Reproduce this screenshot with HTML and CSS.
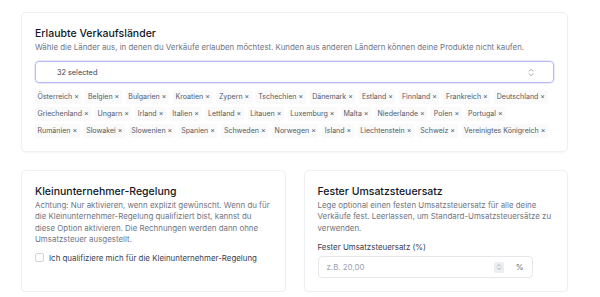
FILE: index.html
```html
<!DOCTYPE html>
<html lang="de">
<head>
<meta charset="utf-8">
<link rel="stylesheet" href="styles.css">
</head>
<body>
<div class="page">
  <section class="card card-wide">
    <h2 class="title">Erlaubte Verkaufsländer</h2>
    <p class="desc">Wähle die Länder aus, in denen du Verkäufe erlauben möchtest. Kunden aus anderen Ländern können deine Produkte nicht kaufen.</p>
    <div class="select">
      <span class="select-text">32 selected</span>
      <svg class="chev" width="8" height="9" viewBox="0 0 8 9"><path d="M2 3.2 L4 1.3 L6 3.2 M2 5.8 L4 7.7 L6 5.8" fill="none" stroke="#9ca3af" stroke-width="0.9" stroke-linecap="round" stroke-linejoin="round"/></svg>
    </div>
    <div class="chips">
      <span class="chip">Österreich ×</span>
      <span class="chip">Belgien ×</span>
      <span class="chip">Bulgarien ×</span>
      <span class="chip">Kroatien ×</span>
      <span class="chip">Zypern ×</span>
      <span class="chip">Tschechien ×</span>
      <span class="chip">Dänemark ×</span>
      <span class="chip">Estland ×</span>
      <span class="chip">Finnland ×</span>
      <span class="chip">Frankreich ×</span>
      <span class="chip">Deutschland ×</span>
      <span class="chip">Griechenland ×</span>
      <span class="chip">Ungarn ×</span>
      <span class="chip">Irland ×</span>
      <span class="chip">Italien ×</span>
      <span class="chip">Lettland ×</span>
      <span class="chip">Litauen ×</span>
      <span class="chip">Luxemburg ×</span>
      <span class="chip">Malta ×</span>
      <span class="chip">Niederlande ×</span>
      <span class="chip">Polen ×</span>
      <span class="chip">Portugal ×</span>
      <span class="chip">Rumänien ×</span>
      <span class="chip">Slowakei ×</span>
      <span class="chip">Slowenien ×</span>
      <span class="chip">Spanien ×</span>
      <span class="chip">Schweden ×</span>
      <span class="chip">Norwegen ×</span>
      <span class="chip">Island ×</span>
      <span class="chip">Liechtenstein ×</span>
      <span class="chip">Schweiz ×</span>
      <span class="chip">Vereinigtes Königreich ×</span>
    </div>
  </section>
  <section class="card">
    <h2 class="title">Kleinunternehmer-Regelung</h2>
    <p class="desc">Achtung: Nur aktivieren, wenn explizit gewünscht. Wenn du für die Kleinunternehmer-Regelung qualifiziert bist, kannst du diese Option aktivieren. Die Rechnungen werden dann ohne Umsatzsteuer ausgestellt.</p>
    <label class="check">
      <span class="box"></span>
      <span class="check-label">Ich qualifiziere mich für die Kleinunternehmer-Regelung</span>
    </label>
  </section>
  <section class="card">
    <h2 class="title">Fester Umsatzsteuersatz</h2>
    <p class="desc">Lege optional einen festen Umsatzsteuersatz für alle deine Verkäufe fest. Leerlassen, um Standard-Umsatzsteuersätze zu verwenden.</p>
    <div class="field-label">Fester Umsatzsteuersatz (%)</div>
    <div class="input">
      <span class="placeholder">z.B. 20,00</span>
      <span class="spin">
        <svg width="6" height="8" viewBox="0 0 6 8"><path d="M1.5 3 L3 1.5 L4.5 3 M1.5 5 L3 6.5 L4.5 5" fill="none" stroke="#9ca3af" stroke-width="0.8" stroke-linecap="round" stroke-linejoin="round"/></svg>
      </span>
      <span class="unit">%</span>
    </div>
  </section>
</div>
</body>
</html>
```
FILE: styles.css
```css
* { box-sizing: border-box; }
html, body { margin: 0; padding: 0; background: #ffffff; }
body {
  font-family: Inter, "Noto Sans", sans-serif;
  color: #111827;
}
.page {
  display: grid;
  grid-template-columns: 1fr 1fr;
  gap: 18px;
  padding: 12px 32px 0 21px;
}
.card {
  background: #fff;
  border: 1px solid #eef0f3;
  border-radius: 5px;
  box-shadow: 0 1px 2px rgba(0,0,0,0.04);
  padding: 14px 13px 13px 13px;
}
.card-wide { grid-column: 1 / 3; }
.title {
  margin: 0;
  font-size: 10.5px;
  line-height: 14px;
  font-weight: 500;
  color: #111827;
}
.desc {
  margin: 1px 0 0 0;
  font-size: 7.9px;
  line-height: 11.4px;
  color: #70757f;
}
.select {
  margin-top: 8px;
  height: 22px;
  border: 1px solid #b9b8fb;
  border-radius: 4px;
  display: flex;
  align-items: center;
  padding: 0 18px 0 21px;
  box-shadow: 0 0 0 0.5px #d6d5fd;
}
.select-text {
  flex: 1;
  font-size: 7.3px;
  color: #374151;
}
.chev { display: block; }
.chips {
  display: flex;
  flex-wrap: wrap;
  gap: 2.8px 4px;
  margin-top: 7px;
  padding-right: 5px;
}
.chip {
  background: #fafafb;
  border-radius: 2px;
  padding: 0 2.5px;
  height: 14px;
  line-height: 14px;
  font-size: 7.05px;
  color: #555b66;
}
.check {
  display: flex;
  align-items: center;
  gap: 5px;
  margin-top: 7px;
}
.box {
  width: 9px;
  height: 9px;
  border: 1px solid #d1d5db;
  border-radius: 2px;
  background: #fff;
}
.check-label {
  font-size: 7.9px;
  color: #374151;
}
.field-label {
  margin-top: 8px;
  font-size: 7.9px;
  line-height: 11px;
  color: #374151;
}
.input {
  margin-top: 3px;
  width: 215px;
  height: 22px;
  border: 1px solid #e5e7eb;
  border-radius: 4px;
  display: flex;
  align-items: center;
  padding: 0 8px 0 8px;
}
.placeholder {
  flex: 1;
  font-size: 7.9px;
  color: #9ca3af;
}
.spin {
  width: 10px;
  height: 11px;
  background: #eceef1;
  border-radius: 2px;
  display: flex;
  align-items: center;
  justify-content: center;
  margin-right: 12px;
}
.spin svg { display: block; }
.unit {
  font-size: 7.9px;
  color: #6b7280;
}
```
